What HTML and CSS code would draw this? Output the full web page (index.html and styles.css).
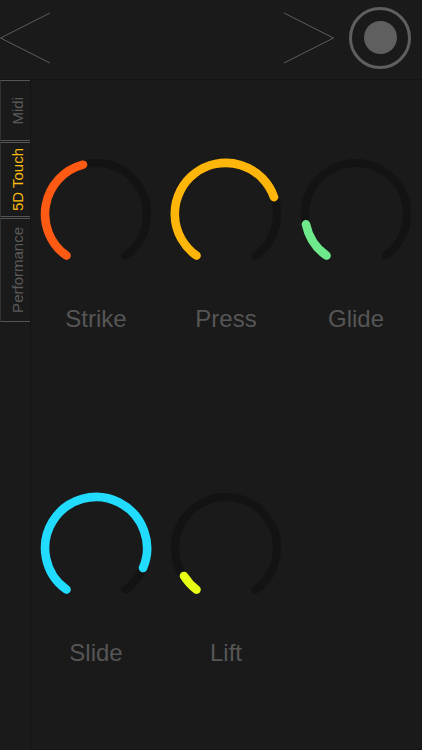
FILE: index.html
```html
<!DOCTYPE html>
<html lang="en">
<head>
<meta charset="utf-8">
<title>5D Touch</title>
<link rel="stylesheet" href="styles.css">
</head>
<body>
<header class="top">
  <svg class="nav" width="51" height="52" viewBox="0 0 51 52"><path d="M50 1L0.500 26L50 51"/></svg>
  <svg class="nav" width="52" height="52" viewBox="0 0 52 52"><path d="M1 1L50.500 26L1 51"/></svg>
  <button class="rec"><span class="rec-dot"></span></button>
</header>
<div class="body">
  <nav class="tabs">
    <div class="tab tab-midi"><span>Midi</span></div>
    <div class="tab tab-touch active"><span>5D Touch</span></div>
    <div class="tab tab-perf"><span>Performance</span></div>
  </nav>
  <main class="grid">
    <div class="knob">
      <svg width="116" height="116" viewBox="-58 -58 116 116"><path class="track" d="M-29.500 41.600A51 51 0 1 1 29.500 41.600"/><path class="val strike" d="M-29.500 41.600A51 51 0 0 1 -13 -49.300"/></svg>
      <div class="label">Strike</div>
    </div>
    <div class="knob">
      <svg width="116" height="116" viewBox="-58 -58 116 116"><path class="track" d="M-29.500 41.600A51 51 0 1 1 29.500 41.600"/><path class="val press" d="M-29.500 41.600A51 51 0 1 1 48 -16.800"/></svg>
      <div class="label">Press</div>
    </div>
    <div class="knob">
      <svg width="116" height="116" viewBox="-58 -58 116 116"><path class="track" d="M-29.500 41.600A51 51 0 1 1 29.500 41.600"/><path class="val glide" d="M-29.500 41.600A51 51 0 0 1 -50 10.300"/></svg>
      <div class="label">Glide</div>
    </div>
    <div class="knob">
      <svg width="116" height="116" viewBox="-58 -58 116 116"><path class="track" d="M-29.500 41.600A51 51 0 1 1 29.500 41.600"/><path class="val slide" d="M-29.500 41.600A51 51 0 1 1 47 20"/></svg>
      <div class="label">Slide</div>
    </div>
    <div class="knob">
      <svg width="116" height="116" viewBox="-58 -58 116 116"><path class="track" d="M-29.500 41.600A51 51 0 1 1 29.500 41.600"/><path class="val lift" d="M-29.500 41.600A51 51 0 0 1 -42 28"/></svg>
      <div class="label">Lift</div>
    </div>
  </main>
</div>
</body>
</html>
```
FILE: styles.css
```css
* { box-sizing: border-box; }
html, body { margin: 0; height: 100%; }
body {
  width: 422px;
  height: 750px;
  overflow: hidden;
  background: #1a1a1a;
  font-family: "Liberation Sans", Arial, sans-serif;
  display: flex;
  flex-direction: column;
}
.top {
  height: 80px;
  flex: none;
  display: flex;
  align-items: center;
  border-bottom: 1px solid #141414;
  padding-bottom: 5px;
}
.nav { flex: none; margin-top: 1px; }
.nav path { fill: none; stroke: #5c5c5c; stroke-width: 1; }
.nav + .nav { margin-left: 232px; }
.rec {
  flex: none;
  width: 62px;
  height: 62px;
  margin-left: 14px;
  margin-top: 1px;
  padding: 0;
  border: 3px solid #5f5f5f;
  border-radius: 50%;
  background: none;
  display: flex;
  align-items: center;
  justify-content: center;
}
.rec-dot { width: 33px; height: 33px; border-radius: 50%; background: #5f5f5f; }
.body { flex: 1; display: flex; min-height: 0; }
.tabs {
  width: 31px;
  flex: none;
  border-right: 1px solid #141414;
  display: flex;
  flex-direction: column;
}
.tab {
  width: 30px;
  border-top: 1px solid #555;
  border-bottom: 1px solid #555;
  border-left: 1px solid #333;
  padding-left: 3px;
  display: flex;
  align-items: center;
  justify-content: center;
  color: #5a5a5a;
  font-size: 15px;
}
.tab span { writing-mode: vertical-rl; transform: rotate(180deg); white-space: nowrap; }
.tab-midi { height: 61px; }
.tab-touch { height: 75px; margin-top: 1px; }
.tab-perf { height: 104px; margin-top: 1px; }
.active { color: #fbbb10; }
.grid {
  flex: 1;
  display: grid;
  grid-template-columns: repeat(3, 130px);
  grid-template-rows: 334px auto;
  align-content: start;
  padding-top: 76px;
  border-right: 1px solid #141414;
  border-bottom: 1px solid #141414;
}
.knob { display: flex; flex-direction: column; align-items: center; }
.label { color: #565656; font-size: 24px; line-height: 28px; margin-top: 33px; }
svg path { fill: none; }
.track, .val { stroke-linecap: round; }
.track { stroke: #131313; stroke-width: 8; }
.val { stroke-width: 8.6; }
.strike { stroke: #ff5a14; }
.press { stroke: #ffb60a; }
.glide { stroke: #6ee98c; }
.slide { stroke: #22dcff; }
.lift { stroke: #e6ff14; }
```
